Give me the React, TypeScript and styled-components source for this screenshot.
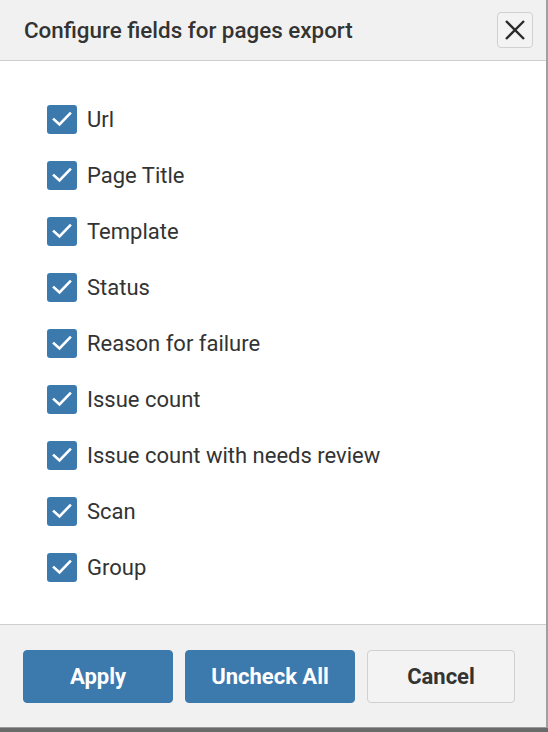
import React, { useState } from "react";
import styled, { createGlobalStyle } from "styled-components";

const GlobalStyle = createGlobalStyle`
  html, body {
    margin: 0;
    padding: 0;
    background: #6a6a6a;
  }
  body {
    font-family: Roboto, "Liberation Sans", Arial, sans-serif;
    color: #333;
  }
`;

const FIELDS = [
  "Url",
  "Page Title",
  "Template",
  "Status",
  "Reason for failure",
  "Issue count",
  "Issue count with needs review",
  "Scan",
  "Group",
];

const Dialog = styled.div`
  width: 546px;
  height: 728px;
  display: flex;
  flex-direction: column;
  background: #fff;
  border-right: 2px solid #a0a0a0;
  box-sizing: content-box;
`;

const Header = styled.header`
  height: 60px;
  display: flex;
  align-items: center;
  justify-content: space-between;
  padding: 0 13px 0 24px;
  background: #f1f1f1;
  border-bottom: 1px solid #cfcfcf;
`;

const Title = styled.h2`
  margin: 0;
  font-size: 22.4px;
  font-weight: 500;
  color: #333;
  padding-bottom: 1px;
`;

const CloseButton = styled.button`
  width: 36px;
  height: 36px;
  padding: 0;
  display: flex;
  align-items: center;
  justify-content: center;
  background: #f3f3f3;
  border: 1px solid #d0d0d0;
  border-radius: 4px;
  cursor: pointer;
`;

const Body = styled.ul`
  flex: 1;
  margin: 0;
  padding: 30px 0 0 47px;
  list-style: none;
`;

const Row = styled.li`
  height: 56px;
  display: flex;
  align-items: center;
  gap: 10px;
  font-size: 22px;
  color: #333;
  cursor: pointer;
`;

const Box = styled.span<{ $checked: boolean }>`
  width: 30px;
  height: 29px;
  border-radius: 3px;
  display: flex;
  align-items: center;
  justify-content: center;
  background: ${(p) => (p.$checked ? "#3c79ad" : "#fff")};
  border: ${(p) => (p.$checked ? "none" : "1px solid #999")};
  box-sizing: border-box;
`;

const Footer = styled.footer`
  height: 102px;
  display: flex;
  align-items: center;
  gap: 12px;
  padding: 0 0 0 23px;
  background: #f1f1f1;
  border-top: 1px solid #cfcfcf;
  border-bottom: 1px solid #9a9a9a;
`;

const Button = styled.button<{ $primary?: boolean; $w: number }>`
  width: ${(p) => p.$w}px;
  height: 53px;
  border-radius: 4px;
  font-family: inherit;
  font-size: 22px;
  font-weight: 700;
  cursor: pointer;
  background: ${(p) => (p.$primary ? "#3c79ad" : "#f3f3f3")};
  color: ${(p) => (p.$primary ? "#fff" : "#333")};
  border: 1px solid ${(p) => (p.$primary ? "#3c79ad" : "#d0d0d0")};
  margin-top: 1px;
`;

const Check = () => (
  <svg width="20" height="16" viewBox="0 0 20 16">
    <polyline
      points="2,8.5 7.5,13.5 18,2.5"
      fill="none"
      stroke="#fff"
      strokeWidth="2.6"
      strokeLinecap="square"
    />
  </svg>
);

const CloseIcon = () => (
  <svg width="20" height="20" viewBox="0 0 20 20">
    <path d="M1 1 L19 19 M19 1 L1 19" stroke="#2b2b2b" strokeWidth="2.4" />
  </svg>
);

export default function App() {
  const [checked, setChecked] = useState<boolean[]>(FIELDS.map(() => true));
  const toggle = (i: number) =>
    setChecked((c) => c.map((v, j) => (j === i ? !v : v)));

  return (
    <>
      <GlobalStyle />
      <Dialog>
        <Header>
          <Title>Configure fields for pages export</Title>
          <CloseButton aria-label="Close">
            <CloseIcon />
          </CloseButton>
        </Header>
        <Body>
          {FIELDS.map((f, i) => (
            <Row key={f} onClick={() => toggle(i)}>
              <Box $checked={checked[i]}>{checked[i] && <Check />}</Box>
              {f}
            </Row>
          ))}
        </Body>
        <Footer>
          <Button $primary $w={150}>Apply</Button>
          <Button $primary $w={170} onClick={() => setChecked(FIELDS.map(() => false))}>
            Uncheck All
          </Button>
          <Button $w={148}>Cancel</Button>
        </Footer>
      </Dialog>
    </>
  );
}
